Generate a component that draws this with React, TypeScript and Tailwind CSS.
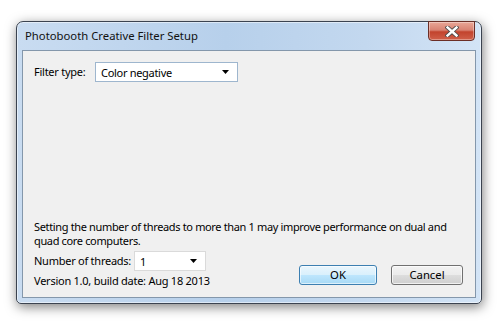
import React from 'react';

const font = { fontFamily: '"Noto Sans", "Open Sans", sans-serif' };

function ComboArrow() {
  return (
    <svg width="7" height="4" viewBox="0 0 7 4" className="shrink-0">
      <path d="M0 0h7L3.5 4z" fill="#000" />
    </svg>
  );
}

function Combo({ value, width, border }: { value: string; width: string; border: string }) {
  return (
    <div className={`${width} ${border} flex h-[20px] shrink-0 items-center justify-between border bg-white pl-[5px] pr-[8px]`}>
      <span className="leading-none tracking-[-0.3px] text-[11px]">{value}</span>
      <ComboArrow />
    </div>
  );
}

function CloseGlyph() {
  return (
    <svg width="14" height="11" viewBox="0 0 14 11">
      <path d="M2.5 1.5l9 8M11.5 1.5l-9 8" stroke="#4a4a4a" strokeWidth="4.2" strokeLinecap="square" />
      <path d="M2.5 1.5l9 8M11.5 1.5l-9 8" stroke="#fff" strokeWidth="2.4" strokeLinecap="square" />
    </svg>
  );
}

export default function App() {
  return (
    <div className="h-[326px] w-[504px] overflow-hidden bg-white pl-[16px] pt-[21px] text-[11.3px] text-black" style={font}>
      <div className="relative flex h-[283px] w-[466px] flex-col rounded-t-[7px] rounded-b-[5px] border border-[#3b4350] bg-[linear-gradient(90deg,#c9dcf1,#b7d0eb_45%,#c3d8ef_75%,#d3e4f6)] shadow-[1px_3px_12px_rgba(0,0,0,0.5),inset_0_0_0_1px_rgba(255,255,255,0.5)]">
        {/* title bar */}
        <div className="flex h-[28px] shrink-0 items-center pl-[8px] text-[#111]">
          Photobooth Creative Filter Setup
        </div>
        <div className="absolute right-[6px] top-[-1px] flex h-[20px] w-[47px] items-center justify-center rounded-b-[4px] border border-[#6b2e26] bg-[linear-gradient(180deg,#e9a797,#d98272_45%,#c2432d_55%,#d0604a)] shadow-[inset_0_0_0_1px_rgba(255,255,255,0.35)]">
          <CloseGlyph />
        </div>

        {/* client area */}
        <div className="mx-[5px] mb-[5px] flex flex-1 flex-col border border-[#8497ab] bg-[#f0f0f0] pb-[9px] pl-[11px] pr-[12px] pt-[11px] text-[11px] tracking-[-0.25px]">
          <div className="flex items-center">
            <span className="w-[61px] shrink-0 whitespace-nowrap">Filter type:</span>
            <Combo value="Color negative" width="w-[143px]" border="border-[#9eb6ce]" />
          </div>

          <div className="flex-1" />

          <p className="leading-[14px] tracking-[-0.35px]">
            Setting the number of threads to more than 1 may improve performance on dual and quad core computers.
          </p>

          <div className="mt-[3px] flex justify-between">
            <div className="flex flex-col">
              <div className="flex items-center">
                <span className="w-[100px] shrink-0 whitespace-nowrap">Number of threads:</span>
                <Combo value="1" width="w-[72px]" border="border-[#dadada]" />
              </div>
              <div className="mt-[3px] whitespace-nowrap leading-[14px]">Version 1.0, build date: Aug 18 2013</div>
            </div>
            <div className="flex gap-[14px] pt-[14px] text-[11.3px] tracking-normal">
              <button className="flex h-[20px] w-[78px] items-center justify-center rounded-[3px] border border-[#3c7fb1] bg-[linear-gradient(180deg,#eaf6fd,#d9f0fc_50%,#bee6fd_51%,#a7d9f5)] shadow-[inset_0_0_0_1px_rgba(255,255,255,0.6)]">
                OK
              </button>
              <button className="flex h-[20px] w-[72px] items-center justify-center rounded-[3px] border border-[#707070] bg-[linear-gradient(180deg,#f2f2f2,#ebebeb_50%,#dddddd_51%,#cfcfcf)] shadow-[inset_0_0_0_1px_rgba(255,255,255,0.7)]">
                Cancel
              </button>
            </div>
          </div>
        </div>
      </div>
    </div>
  );
}
